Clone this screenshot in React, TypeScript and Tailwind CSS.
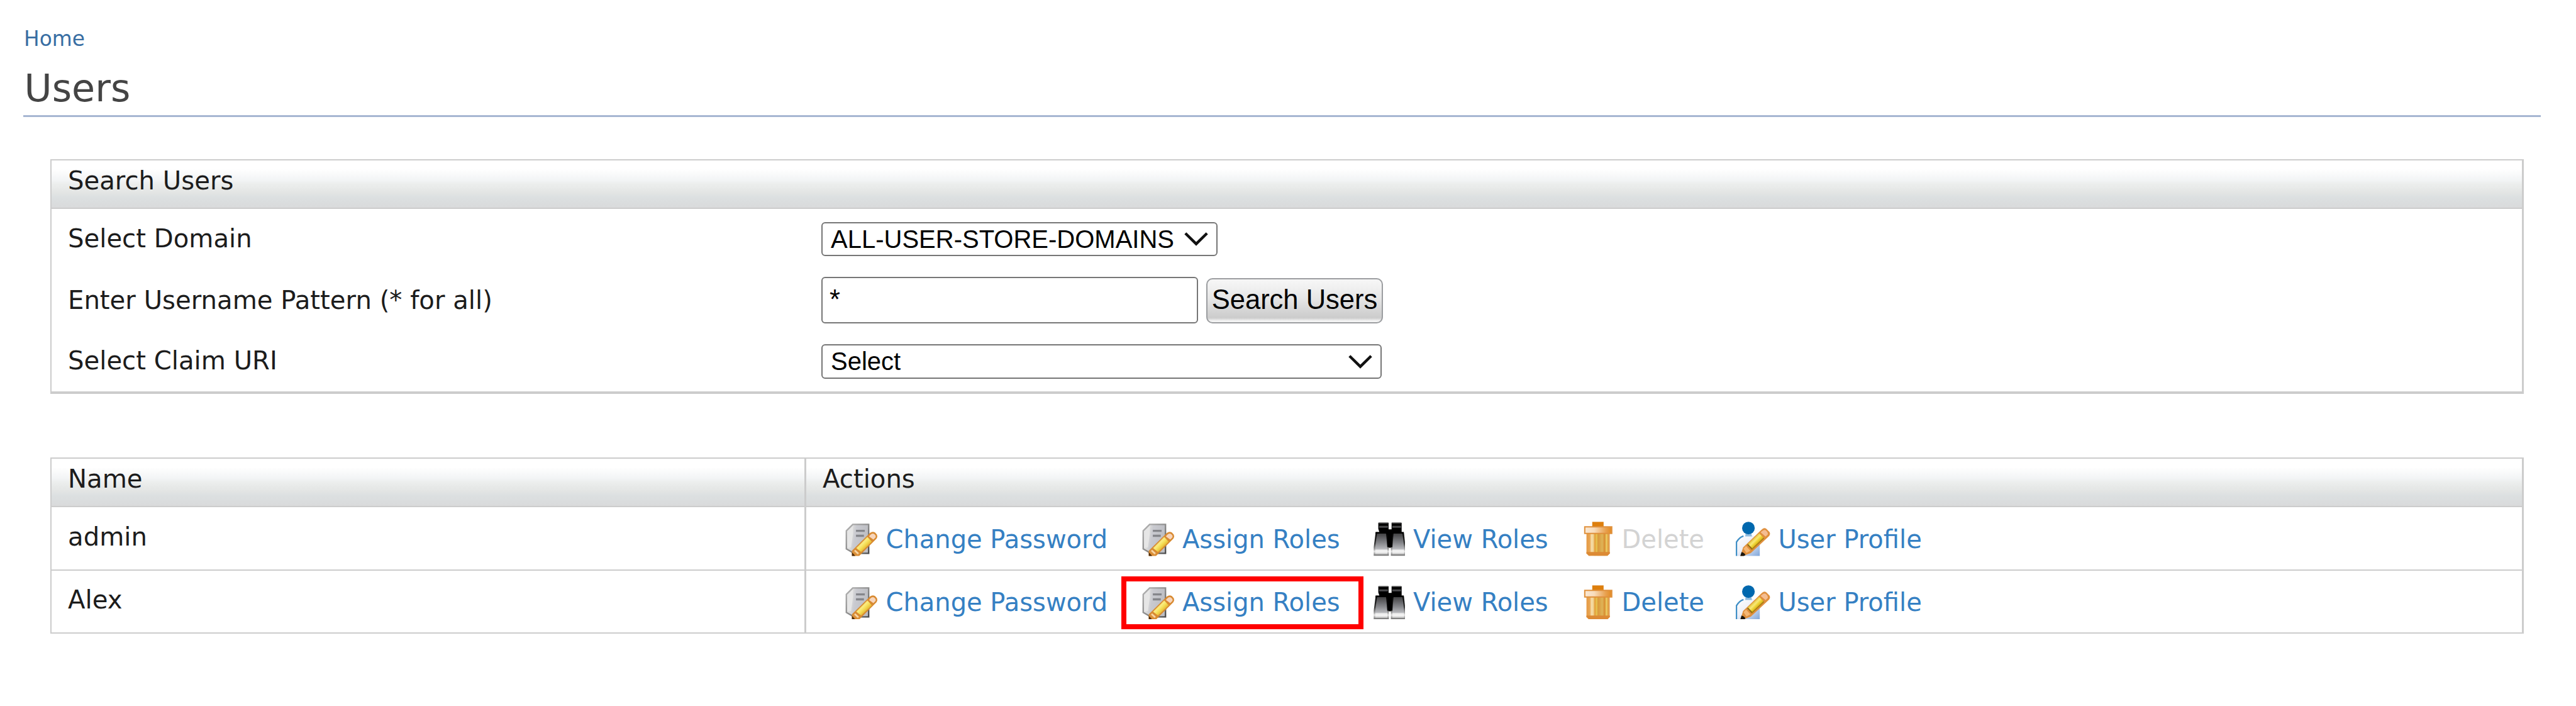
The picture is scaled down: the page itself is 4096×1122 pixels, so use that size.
import type { ReactNode } from "react";

const HEADER =
  "bg-[linear-gradient(to_bottom,#ffffff_0%,#ffffff_18%,#f2f4f5_42%,#eceeed_50%,#e3e5e4_68%,#dce0e1_78%,#d9dadb_100%)]";

function IconDefs() {
  return (
    <svg className="absolute h-0 w-0" aria-hidden="true">
      <defs>
        <linearGradient id="page" x1="0" y1="0" x2="1" y2="0.2">
          <stop offset="0" stopColor="#efefef" />
          <stop offset="0.3" stopColor="#dadada" />
          <stop offset="0.45" stopColor="#c9cad0" />
          <stop offset="1" stopColor="#bdbec3" />
        </linearGradient>
        <linearGradient id="pageEdge" x1="0" y1="0" x2="1" y2="1">
          <stop offset="0" stopColor="#b4b4b4" />
          <stop offset="0.5" stopColor="#8e8e8e" />
          <stop offset="1" stopColor="#4c4c4c" />
        </linearGradient>
        <linearGradient id="yellow" gradientUnits="userSpaceOnUse" x1="7.8" y1="9" x2="11.2" y2="12.4">
          <stop offset="0" stopColor="#ecc650" />
          <stop offset="0.35" stopColor="#faec80" />
          <stop offset="0.6" stopColor="#f5dc52" />
          <stop offset="1" stopColor="#dba72c" />
        </linearGradient>
        <linearGradient id="yellowDeep" gradientUnits="userSpaceOnUse" x1="7.6" y1="8" x2="10.6" y2="11">
          <stop offset="0" stopColor="#dfb52e" />
          <stop offset="0.35" stopColor="#f8ea78" />
          <stop offset="0.6" stopColor="#ecd030" />
          <stop offset="1" stopColor="#c4960e" />
        </linearGradient>
        <linearGradient id="barrel" x1="0" y1="0" x2="0" y2="1">
          <stop offset="0" stopColor="#3c3c3e" />
          <stop offset="0.45" stopColor="#85868a" />
          <stop offset="0.72" stopColor="#b6b7bb" />
          <stop offset="0.78" stopColor="#efefef" />
          <stop offset="0.88" stopColor="#f2f2f2" />
          <stop offset="1" stopColor="#a2a2a2" />
        </linearGradient>
        <linearGradient id="barrelEdge" x1="0" y1="0" x2="0" y2="1">
          <stop offset="0" stopColor="#000000" />
          <stop offset="0.5" stopColor="#3a3a3a" />
          <stop offset="0.74" stopColor="#a0a0a0" />
          <stop offset="0.84" stopColor="#e2e2e2" />
          <stop offset="1" stopColor="#7c7c7c" />
        </linearGradient>
        <linearGradient id="can" x1="0" y1="0" x2="1" y2="0">
          <stop offset="0" stopColor="#e59a45" />
          <stop offset="0.14" stopColor="#e8a552" />
          <stop offset="0.22" stopColor="#f6dfae" />
          <stop offset="0.3" stopColor="#f0cf8c" />
          <stop offset="0.36" stopColor="#e39a34" />
          <stop offset="0.43" stopColor="#e6c452" />
          <stop offset="0.5" stopColor="#d9983a" />
          <stop offset="0.68" stopColor="#deb458" />
          <stop offset="0.78" stopColor="#d98e30" />
          <stop offset="0.86" stopColor="#eccf66" />
          <stop offset="0.93" stopColor="#e09a3c" />
          <stop offset="1" stopColor="#e4a868" />
        </linearGradient>
        <linearGradient id="rim" x1="0" y1="0" x2="1" y2="0">
          <stop offset="0" stopColor="#f9e8d4" />
          <stop offset="0.35" stopColor="#f8dcbc" />
          <stop offset="0.75" stopColor="#e9a455" />
          <stop offset="1" stopColor="#e28a22" />
        </linearGradient>
        <linearGradient id="torso" x1="0" y1="0" x2="1" y2="1">
          <stop offset="0" stopColor="#ffffff" />
          <stop offset="0.45" stopColor="#eef0f8" />
          <stop offset="1" stopColor="#7fa6da" />
        </linearGradient>
        <filter id="soft" x="-5%" y="-5%" width="110%" height="110%">
          <feGaussianBlur stdDeviation="0.2" />
        </filter>
      </defs>
    </svg>
  );
}

function Icon({ children }: { children: ReactNode }) {
  return (
    <svg viewBox="0 0 16 16" className="h-[54.5px] w-[54.5px] shrink-0 overflow-hidden">
      <g filter="url(#soft)">{children}</g>
    </svg>
  );
}

function EditIcon() {
  return (
    <Icon>
      <path d="M1.4 4.3 4.4 1.3H11.8V14.8H5L1.4 12.7Z" fill="url(#page)" stroke="url(#pageEdge)" strokeWidth="0.7" />
      <path d="M1.8 4.7 4.5 1.8V5.6L3.6 12 1.8 12.2Z" fill="#e6e6e6" />
      <path d="M5.9 4.3H10M5.9 6.6H9.6" stroke="#85868b" strokeWidth="1" />
      <path d="M4 16V13.6L12.4 5.3Q13.6 4.3 14.8 5.1L15.7 6.1Q16.1 7 15.5 7.9L8 15.4 7.4 16Z" fill="#d88a30" />
      <path d="M6 12.3 11.2 7.1 13.3 9.4 8.3 14.2Z" fill="url(#yellow)" />
      <path d="M12.6 6.2Q13.6 5.2 14.5 5.9T15 7.4L14 8.4 12 6.9Z" fill="#f7d5bb" />
      <path d="M4.2 14.2 5.4 13 7.7 15 6.8 15.8Z" fill="#dc9440" />
      <path d="M5.3 13.4 7 15" stroke="#f8d6a6" strokeWidth="0.8" />
      <path d="M4 16V14.3L5.6 16Z" fill="#4d2b07" />
    </Icon>
  );
}

function BinocularsIcon() {
  return (
    <Icon>
      <path d="M3.4 0.5H8.2V3.6H9.6V0.5H14.3V4.9H15.2V9L13 12.2H4L2.1 9V4.9H3.9L3.4 3.4Z" fill="#050505" />
      <path d="M3.8 2.4H7.9M9.9 2.4H14" stroke="#4a4a4c" strokeWidth="0.9" />
      <path d="M3.6 0.6H8M9.7 0.6H14" stroke="#6c6c6c" strokeWidth="0.4" />
      <path d="M2.5 5.2H7.3L8 12.4V15.6H1.6V12Z" fill="url(#barrel)" stroke="url(#barrelEdge)" strokeWidth="0.7" />
      <path d="M10.2 5.2H15L15.8 12V15.6H9.6V12.4Z" fill="url(#barrel)" stroke="url(#barrelEdge)" strokeWidth="0.7" />
      <path d="M7.4 4.6H10V11.9H7.6Z" fill="#050505" />
    </Icon>
  );
}

function TrashIcon() {
  return (
    <Icon>
      <path d="M6.1 0.1H11.4V2.4H6.1Z" fill="#dd7f0c" />
      <path d="M3.4 5.4H14.3V14.8L13.2 15.9H4.5L3.4 14.8Z" fill="url(#can)" />
      <path d="M3.4 14.2H14.3V14.8L13.2 15.9H4.5L3.4 14.8Z" fill="#dc8a35" />
      <path d="M2.6 2.4H15.2V5.5H2.6Z" fill="url(#rim)" stroke="#e0913c" strokeWidth="0.6" />
    </Icon>
  );
}

function ProfileIcon() {
  return (
    <Icon>
      <path d="M0.3 16V9.6Q1.6 7.3 4.2 6.5H8.6Q11.2 8 11.2 11V16Z" fill="url(#torso)" />
      <path d="M0.3 16V9.6Q1.6 7.3 3.6 6.7" fill="none" stroke="#3f8fc6" strokeWidth="0.7" />
      <path d="M4.6 5.4H7.2L7.6 6.9H4.4Z" fill="#8dbbe0" />
      <circle cx="5.9" cy="3" r="2.95" fill="#0468ae" />
      <path d="M2.2 16 3.4 12 12.3 3.5Q13.3 2.6 14.3 3.4L15.8 4.9Q16.2 5.8 15.6 6.7L7 14.7 3.4 16Z" fill="#df8f3c" />
      <path d="M5.4 10.5 10.9 5.4 13.1 7.7 7.6 12.9Z" fill="url(#yellowDeep)" />
      <path d="M5.5 10.6 7.7 12.9" stroke="#8d6a14" strokeWidth="0.6" />
      <path d="M7.4 13 13.1 7.7" stroke="#a87f12" strokeWidth="0.5" />
      <path d="M12.2 4.5Q13.4 3.4 14.3 4.3T14.9 6L13.9 7 11.6 5Z" fill="#f4bd92" />
      <path d="M3.6 12.6 4.8 11.4 6.8 13.6 5 14.6Z" fill="#f5b774" />
      <path d="M2.1 16 2.7 14.2Q4 14.5 4.5 15.6L3.8 16Z" fill="#1d1710" />
    </Icon>
  );
}

function Chevron() {
  return (
    <svg viewBox="0 0 38 22" className="h-[22px] w-[38px] shrink-0" fill="none">
      <path d="M1.8 1.8 19 18.6 36.2 1.8" stroke="#111" strokeWidth="4.4" />
    </svg>
  );
}

function Select({ label, className }: { label: string; className: string }) {
  return (
    <div
      className={`flex items-center justify-between rounded-[6px] border-2 border-[#767676] bg-white pr-[13px] pl-[13px] font-['Liberation_Sans',Arial,sans-serif] text-[40px] text-black ${className}`}
    >
      <span className="pb-[1px] leading-[46px] whitespace-nowrap">{label}</span>
      <Chevron />
    </div>
  );
}

function Action({ icon, text, disabled }: { icon: ReactNode; text: string; disabled?: boolean }) {
  return (
    <a
      className={`flex items-center gap-[13px] text-[40px] whitespace-nowrap ${disabled ? "text-[#d3d3d3]" : "text-[#3580c3]"}`}
    >
      {icon}
      <span className="leading-[48px]">{text}</span>
    </a>
  );
}

function UserRow({
  name,
  deletable,
  highlight,
  className,
}: {
  name: string;
  deletable: boolean;
  highlight?: boolean;
  className: string;
}) {
  return (
    <div className={`flex border-b-2 border-[#ccc] ${className}`}>
      <div className="flex w-[1200px] shrink-0 items-center border-r-[3px] border-[#ccc] pb-[5px] pl-[26px]">{name}</div>
      <div className="grid grid-cols-[471.5px_367px_331.5px_249px_auto] pt-[2px] pl-[59px]">
        <Action icon={<EditIcon />} text="Change Password" />
        <div className="relative flex">
          <Action icon={<EditIcon />} text="Assign Roles" />
          {highlight && (
            <div className="absolute top-[7px] left-[-30px] h-[84px] w-[385px] border-8 border-[#ff0000]" />
          )}
        </div>
        <Action icon={<BinocularsIcon />} text="View Roles" />
        <Action icon={<TrashIcon />} text="Delete" disabled={!deletable} />
        <Action icon={<ProfileIcon />} text="User Profile" />
      </div>
    </div>
  );
}

export default function App() {
  return (
    <div className="h-[1122px] w-[4096px] overflow-hidden bg-white pt-[42px] font-['DejaVu_Sans',sans-serif] text-[40.2px] text-[#1c1c1c]">
      <IconDefs />
      <nav className="pl-[38px] text-[32.8px] leading-[40px] text-[#386ea3]">Home</nav>
      <h1 className="mt-[22px] mr-[56px] ml-[37px] h-[82px] border-b-[3px] border-[#a6b6d2] pl-[1.5px] text-[60.3px] leading-[72px] text-[#444]">
        Users
      </h1>

      <section className="mt-[67px] mr-[83px] ml-[80px] border-t-2 border-r-[3px] border-b-[4px] border-l-2 border-[#ccc]">
        <div className={`h-[77px] border-b-2 border-[#ccc] pt-[8px] pl-[26px] leading-[48px] ${HEADER}`}>Search Users</div>
        <div className="h-[290px] pt-[21px] leading-[48px]">
          <div className="flex h-[54px] items-center">
            <div className="w-[1224px] shrink-0 pb-[3px] pl-[26px]">Select Domain</div>
            <Select label="ALL-USER-STORE-DOMAINS" className="h-[54px] w-[630px]" />
          </div>
          <div className="mt-[33px] flex h-[74px] items-center">
            <div className="w-[1224px] shrink-0 pl-[26px]">Enter Username Pattern (* for all)</div>
            <div className="flex h-[74px] w-[599px] items-center rounded-[6px] border-2 border-[#767676] bg-white pb-[3px] pl-[11px] font-['Liberation_Sans',Arial,sans-serif] text-[43.5px] text-black">
              *
            </div>
            <button className="ml-[13px] flex h-[72px] w-[281px] items-center justify-center self-end rounded-[10px] border-2 border-[#9b9da0] bg-[linear-gradient(to_bottom,#f6f6f6_0%,#f2f2f2_15%,#e6e6e6_45%,#d2d2d2_78%,#cccccc_90%,#f4f4f4_97%)] pb-[5px] font-['Liberation_Sans',Arial,sans-serif] text-[43.5px] whitespace-nowrap text-black">
              Search Users
            </button>
          </div>
          <div className="mt-[33px] flex h-[55px] items-center">
            <div className="w-[1224px] shrink-0 pb-[3px] pl-[26px]">Select Claim URI</div>
            <Select label="Select" className="h-[55px] w-[891px]" />
          </div>
        </div>
      </section>

      <section className="mt-[101px] mr-[83px] ml-[80px] border-t-2 border-r-[3px] border-l-2 border-[#ccc]">
        <div className={`flex h-[77px] border-b-2 border-[#ccc] leading-[48px] ${HEADER}`}>
          <div className="w-[1200px] shrink-0 border-r-[3px] border-[#ccc] pt-[8px] pl-[26px]">Name</div>
          <div className="pt-[8px] pl-[26px]">Actions</div>
        </div>
        <UserRow name="admin" deletable={false} className="h-[101px]" />
        <UserRow name="Alex" deletable highlight className="h-[100px]" />
      </section>
    </div>
  );
}
